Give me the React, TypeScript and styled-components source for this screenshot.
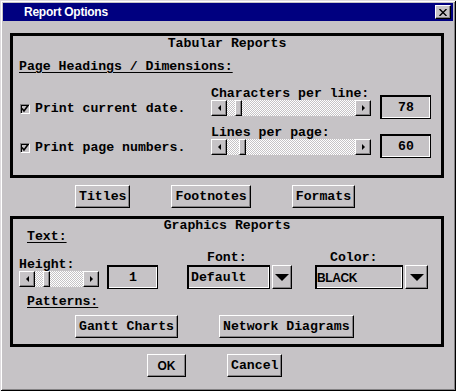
import React from 'react';
import styled, { createGlobalStyle } from 'styled-components';

const GlobalStyle = createGlobalStyle`
  html, body {
    margin: 0;
    padding: 0;
    background: #c6c3c6;
  }
  body {
    width: 456px;
    height: 391px;
    overflow: hidden;
  }
`;

const mono = `'Liberation Mono', 'DejaVu Sans Mono', monospace`;
const sans = `'Liberation Sans', Arial, sans-serif`;

const raised = `
  border: 1px solid;
  border-color: #fff #000 #000 #fff;
  box-shadow: inset -1px -1px 0 #848284;
  background: #c6c3c6;
`;

const Window = styled.div`
  box-sizing: border-box;
  width: 456px;
  height: 391px;
  padding: 3px;
  background: #c6c3c6;
  box-shadow:
    inset 1px 1px 0 #dedbde,
    inset -1px -1px 0 #000,
    inset 2px 2px 0 #fff,
    inset -2px -2px 0 #848284;
  display: flex;
  flex-direction: column;
  font-family: ${mono};
  font-size: 13.2px;
  font-weight: bold;
  line-height: 12px;
  color: #000;
`;

const TitleBar = styled.div`
  height: 18px;
  background: #000080;
  display: flex;
  align-items: center;
  justify-content: space-between;
  padding: 0 2px 0 21px;
`;

const TitleText = styled.span`
  color: #fff;
  font-family: ${sans};
  font-size: 12px;
  font-weight: bold;
  letter-spacing: -0.25px;
  line-height: 14px;
`;

const CloseButton = styled.div`
  box-sizing: border-box;
  width: 16px;
  height: 14px;
  ${raised}
  display: flex;
  align-items: center;
  justify-content: center;
`;

const Body = styled.div`
  display: flex;
  flex-direction: column;
  padding: 12px 9px 0 7px;
`;

const GroupBox = styled.div<{ $pad: string; $top?: number }>`
  border: 3px solid #000;
  display: flex;
  flex-direction: column;
  padding: ${(p) => p.$pad};
  margin-top: ${(p) => p.$top ?? 0}px;
`;

const GroupTitle = styled.div`
  text-align: center;
`;

const SectionLabel = styled.div<{ $left: number; $top: number }>`
  align-self: flex-start;
  margin: ${(p) => p.$top}px 0 0 ${(p) => p.$left}px;
  text-decoration: underline;
  text-underline-offset: 2px;
`;

const TabRow = styled.div<{ $top: number }>`
  display: flex;
  align-items: flex-end;
  margin: ${(p) => p.$top}px 0 0 6px;
`;

const CheckItem = styled.label`
  width: 191px;
  padding-left: 1px;
  margin-bottom: 1px;
  display: flex;
  align-items: center;
  gap: 5px;
  white-space: pre;
`;

const CheckBox = styled.span`
  box-sizing: border-box;
  width: 10px;
  height: 10px;
  border: 1px solid;
  border-color: #848284 #fff #fff #848284;
  box-shadow: inset 1px 1px 0 #000;
  display: flex;
  align-items: center;
  justify-content: center;
`;

const SliderCol = styled.div<{ $bottom?: number }>`
  display: flex;
  flex-direction: column;
  margin-bottom: ${(p) => p.$bottom ?? 0}px;
`;

const SliderBar = styled.div<{ $width: number }>`
  display: flex;
  width: ${(p) => p.$width}px;
  height: 16px;
`;

const ArrowBtn = styled.div`
  box-sizing: border-box;
  width: 16px;
  height: 16px;
  flex: none;
  ${raised}
  display: flex;
  align-items: center;
  justify-content: center;
`;

const Tri = styled.span<{ $dir: 'left' | 'right' }>`
  width: 0;
  height: 0;
  border-top: 3px solid transparent;
  border-bottom: 3px solid transparent;
  ${(p) => (p.$dir === 'left' ? 'border-right: 3px solid #000;' : 'border-left: 3px solid #000;')}
`;

const Track = styled.div<{ $offset: number }>`
  flex: 1;
  display: flex;
  padding-left: ${(p) => p.$offset}px;
  background-color: #c6c3c6;
  background-image: conic-gradient(#fff 25%, transparent 0 50%, #fff 0 75%, transparent 0);
  background-size: 2px 2px;
`;

const Thumb = styled.div`
  box-sizing: border-box;
  width: 7px;
  height: 16px;
  ${raised}
`;

const Sunken = `
  box-sizing: border-box;
  height: 24px;
  border-style: solid;
  border-color: #000;
  border-width: 2px 1px 1px 2px;
  box-shadow: inset -1px -1px 0 #fff;
  background: #c6c3c6;
  display: flex;
  align-items: center;
`;

const ValueBox = styled.div<{ $left: number; $drop: number }>`
  ${Sunken}
  width: 51px;
  justify-content: center;
  margin-left: ${(p) => p.$left}px;
  margin-bottom: ${(p) => -p.$drop}px;
`;

const ButtonRow = styled.div<{ $left: number; $top: number }>`
  display: flex;
  gap: 41px;
  margin-top: ${(p) => p.$top}px;
  padding-left: ${(p) => p.$left}px;
`;

const PushButton = styled.button<{ $sans?: boolean; $min?: number }>`
  box-sizing: border-box;
  height: 23px;
  min-width: ${(p) => p.$min ?? 0}px;
  padding: 0 3px;
  ${raised}
  color: #000;
  font-family: ${(p) => (p.$sans ? sans : mono)};
  font-size: ${(p) => (p.$sans ? '12px' : '13.2px')};
  font-weight: bold;
  line-height: 12px;
  cursor: default;
`;

const ControlRow = styled.div`
  display: flex;
  align-items: flex-end;
  margin: 9px 0 0 6px;
`;

const ControlCol = styled.div<{ $left: number }>`
  display: flex;
  flex-direction: column;
  margin-left: ${(p) => p.$left}px;
`;

const ColLabel = styled.div<{ $indent: number }>`
  padding-left: ${(p) => p.$indent}px;
  margin-bottom: 1px;
`;

const DropRow = styled.div`
  display: flex;
  gap: 2px;
`;

const DropField = styled.div<{ $width: number; $sans?: boolean }>`
  ${Sunken}
  width: ${(p) => p.$width}px;
  padding-left: ${(p) => (p.$sans ? 0 : 2)}px;
  font-family: ${(p) => (p.$sans ? sans : mono)};
  font-size: ${(p) => (p.$sans ? '12px' : '13.2px')};
  letter-spacing: ${(p) => (p.$sans ? '-0.4px' : '0')};
`;

const DropBtn = styled.div<{ $width: number }>`
  box-sizing: border-box;
  width: ${(p) => p.$width}px;
  height: 24px;
  ${raised}
  display: flex;
  align-items: center;
  justify-content: center;
`;

const DownTri = styled.span`
  width: 0;
  height: 0;
  border-left: 7px solid transparent;
  border-right: 7px solid transparent;
  border-top: 7px solid #000;
`;

const Check = () => (
  <svg width="8" height="8" viewBox="0 0 8 8">
    <polyline points="1,3.5 3,6 7,0.5" fill="none" stroke="#000" strokeWidth="1.6" />
  </svg>
);

const Slider: React.FC<{ width: number; offset: number }> = ({ width, offset }) => (
  <SliderBar $width={width}>
    <ArrowBtn>
      <Tri $dir="left" />
    </ArrowBtn>
    <Track $offset={offset}>
      <Thumb />
    </Track>
    <ArrowBtn>
      <Tri $dir="right" />
    </ArrowBtn>
  </SliderBar>
);

export default function App() {
  return (
    <>
      <GlobalStyle />
      <Window>
        <TitleBar>
          <TitleText>Report Options</TitleText>
          <CloseButton>
            <svg width="8" height="7" viewBox="0 0 8 7">
              <path d="M0.5 0 L7.5 7 M7.5 0 L0.5 7" stroke="#000" strokeWidth="1.4" />
            </svg>
          </CloseButton>
        </TitleBar>
        <Body>
          <GroupBox $pad="2px 0 20px 0">
            <GroupTitle>Tabular Reports</GroupTitle>
            <SectionLabel $left={6} $top={11}>
              Page Headings / Dimensions:
            </SectionLabel>
            <TabRow $top={15}>
              <CheckItem>
                <CheckBox>
                  <Check />
                </CheckBox>
                Print current date.
              </CheckItem>
              <SliderCol>
                <div>Characters per line:</div>
                <Slider width={160} offset={8} />
              </SliderCol>
              <ValueBox $left={9} $drop={3}>78</ValueBox>
            </TabRow>
            <TabRow $top={11}>
              <CheckItem>
                <CheckBox>
                  <Check />
                </CheckBox>
                Print page numbers.
              </CheckItem>
              <SliderCol>
                <div>Lines per page:</div>
                <Slider width={160} offset={12} />
              </SliderCol>
              <ValueBox $left={9} $drop={3}>60</ValueBox>
            </TabRow>
          </GroupBox>

          <ButtonRow $left={65} $top={7}>
            <PushButton>Titles</PushButton>
            <PushButton>Footnotes</PushButton>
            <PushButton>Formats</PushButton>
          </ButtonRow>

          <GroupBox $pad="1px 0 6px 0" $top={8}>
            <GroupTitle>Graphics Reports</GroupTitle>
            <SectionLabel $left={14} $top={-1}>
              Text:
            </SectionLabel>
            <ControlRow>
              <SliderCol $bottom={2}>
                <div>Height:</div>
                <Slider width={80} offset={8} />
              </SliderCol>
              <ValueBox $left={8} $drop={0}>1</ValueBox>
              <ControlCol $left={29}>
                <ColLabel $indent={20}>Font:</ColLabel>
                <DropRow>
                  <DropField $width={83}>Default</DropField>
                  <DropBtn $width={20}>
                    <DownTri />
                  </DropBtn>
                </DropRow>
              </ControlCol>
              <ControlCol $left={23}>
                <ColLabel $indent={15}>Color:</ColLabel>
                <DropRow>
                  <DropField $width={88} $sans>
                    BLACK
                  </DropField>
                  <DropBtn $width={23}>
                    <DownTri />
                  </DropBtn>
                </DropRow>
              </ControlCol>
            </ControlRow>
            <SectionLabel $left={14} $top={7}>
              Patterns:
            </SectionLabel>
            <ButtonRow $left={62} $top={7}>
              <PushButton>Gantt Charts</PushButton>
              <PushButton>Network Diagrams</PushButton>
            </ButtonRow>
          </GroupBox>

          <ButtonRow $left={137} $top={7}>
            <PushButton $sans $min={39}>
              OK
            </PushButton>
            <PushButton>Cancel</PushButton>
          </ButtonRow>
        </Body>
      </Window>
    </>
  );
}
